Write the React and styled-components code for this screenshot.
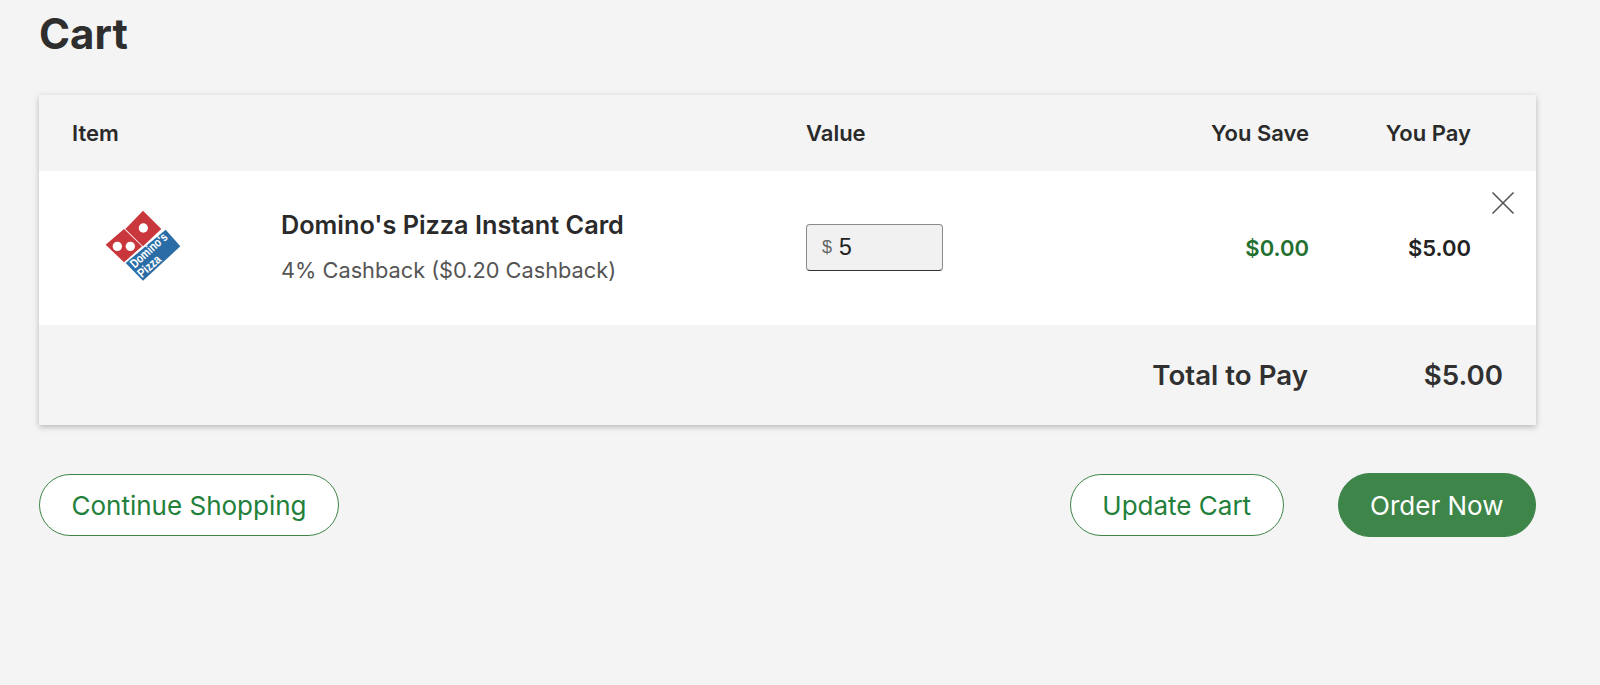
import React from "react";
import styled, { createGlobalStyle } from "styled-components";
import { X } from "lucide-react";

const GlobalStyle = createGlobalStyle`
  html, body {
    margin: 0;
    padding: 0;
    background: #f4f4f4;
    font-family: Inter, "Liberation Sans", sans-serif;
    color: #2a2a2a;
  }
`;

const COLUMNS = "209px 525px 140px 363px 162px 1fr";

const Page = styled.div`
  box-sizing: border-box;
  width: 1600px;
  height: 685px;
  padding: 10px 64px 0 39px;
  overflow: hidden;
`;

const Title = styled.h1`
  margin: 0 0 38px;
  font-size: 42px;
  line-height: 47px;
  font-weight: 700;
  color: #2e2e2e;
`;

const Card = styled.div`
  background: #f4f4f4;
  box-shadow: 0 2px 6px rgba(0, 0, 0, 0.25);
`;

const HeaderRow = styled.div`
  display: grid;
  grid-template-columns: ${COLUMNS};
  align-items: center;
  height: 76px;
  padding-left: 33px;
  font-size: 22px;
  font-weight: 600;
`;

const HeaderCell = styled.div`
  grid-column: ${(p) => p.$span || "auto"};
  text-align: ${(p) => (p.$right ? "right" : "left")};
  white-space: nowrap;
`;

const ItemRow = styled.div`
  position: relative;
  display: grid;
  grid-template-columns: ${COLUMNS};
  align-items: center;
  height: 154px;
  padding-left: 33px;
  background: #fff;
`;

const Logo = styled.svg`
  display: block;
  width: 80px;
  height: 76px;
  margin: -4px 0 0 31px;
`;

const ItemName = styled.div`
  font-size: 25.25px;
  line-height: 30px;
  font-weight: 600;
  margin-top: -4px;
  margin-bottom: 17px;
  white-space: nowrap;
`;

const ItemNote = styled.div`
  font-size: 21.75px;
  line-height: 26px;
  color: #555;
  white-space: nowrap;
`;

const ValueInput = styled.div`
  box-sizing: border-box;
  display: flex;
  align-items: center;
  gap: 7px;
  width: 137px;
  height: 47px;
  margin-top: -2px;
  padding-left: 15px;
  background: #f1f1f1;
  border: 1px solid #8a8a8a;
  border-bottom-color: #333;
  border-radius: 4px;
  font-family: "Liberation Sans", sans-serif;
  font-size: 23px;
  color: #222;
`;

const Dollar = styled.span`
  font-size: 18px;
  color: #666;
`;

const Amount = styled.div`
  text-align: right;
  font-size: 22px;
  font-weight: 600;
  color: ${(p) => p.$color || "#222"};
`;

const Remove = styled.button`
  position: absolute;
  top: 12px;
  right: 13px;
  display: flex;
  padding: 0;
  border: 0;
  background: none;
  color: #555;
`;

const TotalRow = styled.div`
  display: flex;
  justify-content: flex-end;
  align-items: center;
  height: 100px;
  padding-right: 33px;
  font-size: 27.7px;
  font-weight: 600;
  color: #303030;
`;

const TotalValue = styled.div`
  width: 195px;
  text-align: right;
`;

const Actions = styled.div`
  display: flex;
  align-items: center;
  margin-top: 48px;
`;

const Pill = styled.button`
  box-sizing: border-box;
  height: ${(p) => (p.$solid ? "64px" : "62px")};
  padding: 0 31.5px;
  margin-left: ${(p) => p.$gap || "0"};
  border: 1px solid #3d8548;
  border-radius: 32px;
  background: ${(p) => (p.$solid ? "#3d8548" : "#fff")};
  color: ${(p) => (p.$solid ? "#fff" : "#23803a")};
  font-family: inherit;
  font-size: 26px;
  font-weight: 400;
`;

const Spacer = styled.div`
  flex: 1;
`;

const DominosLogo = () => (
  <Logo viewBox="130 80 240 228">
    <path fill="#c9373c" d="M250 88 305 143 250 195 197 143Z" />
    <path fill="#c9373c" d="M193 143 247 195 193 243 138 190Z" />
    <path fill="#2a6da6" d="M318 145 362 195 250 298 198 245Z" />
    <circle cx="251" cy="140" r="14" fill="#fff" />
    <circle cx="173" cy="195" r="14" fill="#fff" />
    <circle cx="212" cy="195" r="14" fill="#fff" />
    <g fill="#fff" fontFamily="Liberation Sans, sans-serif" fontWeight="700" fontSize="38">
      <text transform="translate(225 262) rotate(-42)" textLength="136" lengthAdjust="spacingAndGlyphs">Domino's</text>
      <text transform="translate(247 291) rotate(-42)" textLength="80" lengthAdjust="spacingAndGlyphs">Pizza</text>
    </g>
  </Logo>
);

export default function App() {
  return (
    <Page>
      <GlobalStyle />
      <Title>Cart</Title>
      <Card>
        <HeaderRow>
          <HeaderCell $span="1 / 3">Item</HeaderCell>
          <HeaderCell>Value</HeaderCell>
          <HeaderCell $right>You Save</HeaderCell>
          <HeaderCell $right>You Pay</HeaderCell>
        </HeaderRow>
        <ItemRow>
          <DominosLogo />
          <div>
            <ItemName>Domino's Pizza Instant Card</ItemName>
            <ItemNote>4% Cashback ($0.20 Cashback)</ItemNote>
          </div>
          <ValueInput>
            <Dollar>$</Dollar>5
          </ValueInput>
          <Amount $color="#23702f">$0.00</Amount>
          <Amount>$5.00</Amount>
          <Remove aria-label="Remove">
            <X size={40} strokeWidth={1} />
          </Remove>
        </ItemRow>
        <TotalRow>
          <div>Total to Pay</div>
          <TotalValue>$5.00</TotalValue>
        </TotalRow>
      </Card>
      <Actions>
        <Pill>Continue Shopping</Pill>
        <Spacer />
        <Pill>Update Cart</Pill>
        <Pill $solid $gap="54px">Order Now</Pill>
      </Actions>
    </Page>
  );
}
